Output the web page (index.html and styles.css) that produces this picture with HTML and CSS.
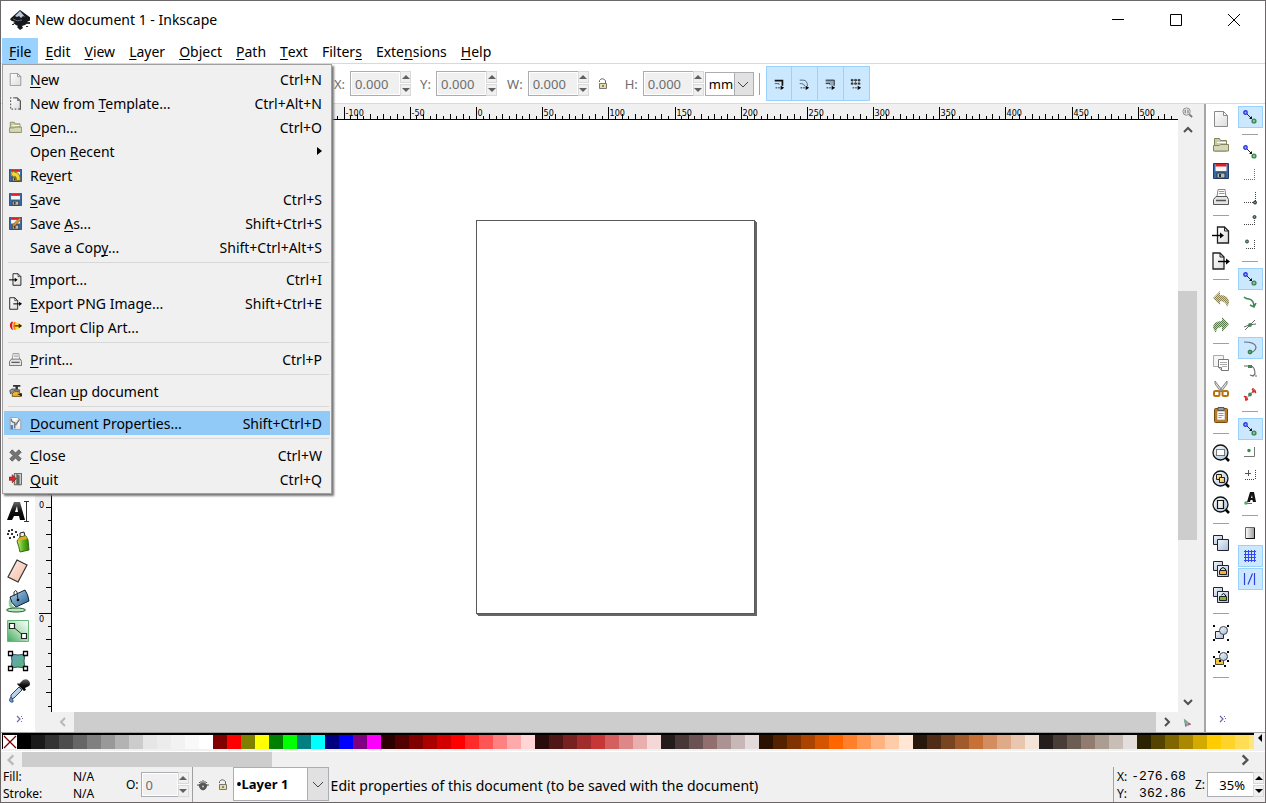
FILE: index.html
```html
<!DOCTYPE html>
<html lang="en">
<head>
<meta charset="utf-8">
<title>New document 1 - Inkscape</title>
<link rel="stylesheet" href="styles.css">
</head>
<body>
<svg class="defs" aria-hidden="true">
  <defs>
    <linearGradient id="g-paper" x1="0" y1="0" x2="1" y2="1"><stop offset="0" stop-color="#fff"/><stop offset="1" stop-color="#dcdcdc"/></linearGradient>
    <linearGradient id="g-lens" x1="0" y1="0" x2="1" y2="1"><stop offset="0" stop-color="#fff"/><stop offset="1" stop-color="#a9c4de"/></linearGradient>
    <linearGradient id="g-sky" x1="0" y1="0" x2="1" y2="1"><stop offset="0" stop-color="#f4f8fc"/><stop offset="1" stop-color="#a3bdd6"/></linearGradient>
    <linearGradient id="g-gold" x1="0" y1="0" x2="1" y2="1"><stop offset="0" stop-color="#fffbd0"/><stop offset="1" stop-color="#f0a818"/></linearGradient>
    <linearGradient id="g-green2" x1="0" y1="1" x2="1" y2="0"><stop offset="0" stop-color="#3fa85a"/><stop offset=".45" stop-color="#a6d9b1"/><stop offset="1" stop-color="#fff"/></linearGradient>
    <linearGradient id="g-can" x1="0" y1="0" x2="1" y2="0"><stop offset="0" stop-color="#c9f08a"/><stop offset=".5" stop-color="#5cb81c"/><stop offset="1" stop-color="#2e7a08"/></linearGradient>
    <linearGradient id="g-blue" x1="0" y1="0" x2="1" y2="1"><stop offset="0" stop-color="#b9d4ea"/><stop offset="1" stop-color="#1f5c94"/></linearGradient>
    <linearGradient id="g-mesh" x1="0" y1="0" x2="1" y2="1"><stop offset="0" stop-color="#6aa0cc"/><stop offset="1" stop-color="#55b866"/></linearGradient>
    <linearGradient id="g-pink" x1="0" y1="0" x2="1" y2="1"><stop offset="0" stop-color="#fff0ea"/><stop offset="1" stop-color="#f2b9a2"/></linearGradient>
    <linearGradient id="g-ink" x1="0" y1="0" x2="0" y2="1"><stop offset="0" stop-color="#666"/><stop offset=".5" stop-color="#111"/><stop offset="1" stop-color="#000"/></linearGradient>
    <linearGradient id="g-box" x1="0" y1="0" x2="1" y2="0"><stop offset="0" stop-color="#fff"/><stop offset="1" stop-color="#999"/></linearGradient>
    <pattern id="p-olive" width="2" height="2" patternUnits="userSpaceOnUse"><rect width="2" height="2" fill="#d8d2ae"/><path d="M0 0h1v1H0zM1 1h1v1H1z" fill="#8c8250"/></pattern>
    <pattern id="p-green" width="2" height="2" patternUnits="userSpaceOnUse"><rect width="2" height="2" fill="#c3d6b4"/><path d="M0 0h1v1H0zM1 1h1v1H1z" fill="#547844"/></pattern>
  </defs>
  <symbol id="i-logo" viewBox="0 0 20 20"><path d="M10 0 1 8q-2 2 1 3l3 1-2 1 3 2 2 1-1 1 3 3 3-2-1-2 3-1 3-2-1-1 2-1q3-1 2-3z" fill="#16181c"/><path d="m10 1-5 5 2 1 2-1 2 2 2-2 2 1z" fill="#b9c8dd"/><path d="M3 9q4 3 9 1" stroke="#667" fill="none"/><path d="M17 12h3v2h-3zM16 16h2v1h-2zM2 14h2v1H2z" fill="#333"/></symbol>
  <symbol id="i-new" viewBox="0 0 16 16"><path d="M1.500.5h9l4 4v11h-13z" fill="url(#g-paper)" stroke="#8a8a8a"/><path d="M10.500.5v4h4z" fill="#fff" stroke="#8a8a8a"/></symbol>
  <symbol id="i-template" viewBox="0 0 16 16"><path d="M2 1h8l4 4v10H2z" fill="url(#g-paper)"/><path d="M7 1h3l4 4v10h-2" fill="none" stroke="#555" stroke-width="1.500"/><path d="M7 1H2v14h10" fill="none" stroke="#666" stroke-width="1.500" stroke-dasharray="2 2"/><path d="M10 1v4h4z" fill="#777"/></symbol>
  <symbol id="i-open" viewBox="0 0 16 16"><path d="M1.500 14V1.500h5l1 2h6v10.500z" fill="#c9cba4" stroke="#82855c"/><path d="M4 6h9V5H4z" fill="#fff"/><path d="M.5 8.500h6l1-1h8v6.500H.5z" fill="#d4d7b8" stroke="#82855c"/></symbol>
  <symbol id="i-save" viewBox="0 0 16 16"><path d="M.5.5h15v15h-15z" fill="#3a6ba8" stroke="#1c3c70"/><path d="M2.500 1h11v7h-11z" fill="#f6f6f6"/><path d="M2.500 1h11v2.500h-11z" fill="#dc1f26"/><path d="M4 10h8v5H4z" fill="#b9bdb4" stroke="#333"/><path d="M6 11h2v3H6z" fill="#234"/></symbol>
  <symbol id="i-saveas" viewBox="0 0 16 16"><use href="#i-save"/><path d="m5 9 8-8 2 2-8 8-3 1z" fill="#e8902c" stroke="#6b4a20" stroke-width=".7"/></symbol>
  <symbol id="i-revert" viewBox="0 0 16 16"><use href="#i-save"/><path d="m2 6 5-4.500v2.500q7 0 7 10h-5q1-4-2-5v2.500z" fill="#f5d62c" stroke="#7a6110"/></symbol>
  <symbol id="i-print" viewBox="0 0 16 16"><path d="M4 8 5 .5h7l1 7.500" fill="#fff" stroke="#888"/><path d="M6 2.500h5M6 4.500h5.500" stroke="#999"/><path d="M3 7.500h11l1.500 3v5H.5v-5z" fill="#e4e4e4" stroke="#555"/><path d="M3 11.500h10" stroke="#555" stroke-width="1.500"/></symbol>
  <symbol id="i-import" viewBox="0 0 18 18"><path d="M5.500 1h7l4 4v12h-11z" fill="url(#g-paper)" stroke="#222" stroke-width="1.300"/><path d="M12.500 1v4h4" fill="none" stroke="#222"/><path d="M0 9.500h9" stroke="#000" stroke-width="1.400"/><path d="m8 6.500 4 3-4 3z"/></symbol>
  <symbol id="i-export" viewBox="0 0 18 18"><path d="M1 1h7l4 4v12H1z" fill="url(#g-paper)" stroke="#222" stroke-width="1.300"/><path d="M8 1v4h4" fill="none" stroke="#222"/><path d="M6 9.500h9" stroke="#000" stroke-width="1.400"/><path d="m14 6.500 4 3-4 3z"/></symbol>
  <symbol id="i-clip" viewBox="0 0 16 16"><path d="M3 1Q-1 5 3 10l2 1Q3 6 5 1z" fill="#e01818"/><path d="M6 1q-2 5 0 10l3-1V2z" fill="#ff7a00"/><path d="M8 2h4l4 4-4 4H8q-2-4 0-8z" fill="#ffe03a"/><path d="M7 6h7M12 4l3 2-3 2" stroke="#321" fill="none" stroke-width="1.300"/></symbol>
  <symbol id="i-clean" viewBox="0 0 16 16"><path d="M5 0h9v2H5zM8 2h3v3H8z" fill="#333"/><path d="M1 7q1-3 6-2l6 1v2L6 7l-4 4z" fill="#999" stroke="#222" stroke-width=".8"/><path d="M4 14q-1-6 5-6t6 6z" fill="#f2b52a" stroke="#5b4210"/><path d="m10 11 6-1v4z" fill="#222"/></symbol>
  <symbol id="i-props" viewBox="0 0 16 16"><path d="M1.500.5h9l4 4v11h-13z" fill="#e8e8e8" stroke="#999"/><path d="M2 2h3v3h2V2h3M12 3v9" fill="none" stroke="#fff" stroke-width="1.500"/><path d="M3 2q-1 4 4 5v7M13 3 8 10" fill="none" stroke="#707b88" stroke-width="1.800"/><path d="M2 10h3v5H2z" fill="#4d7cba"/></symbol>
  <symbol id="i-close" viewBox="0 0 16 16"><path d="m1 4 3-3 4 4 4-4 3 3-4 4 4 4-3 3-4-4-4 4-3-3 4-4z" fill="#747474" stroke="#555"/></symbol>
  <symbol id="i-quit" viewBox="0 0 16 16"><path d="M6.500.5h9v14h-9z" fill="#ccc" stroke="#444"/><path d="m9 1 4 2v12l-4-1z" fill="#5c6a5c"/><path d="M0 5h4V2l5 5-5 5V9H0z" fill="#d9262c" stroke="#7a0c10" stroke-width=".7"/></symbol>
  <symbol id="i-undo" viewBox="0 0 16 16"><path d="m0 7 7-7v4q9 0 9 8l-2 4q-1-6-7-6v4z" fill="url(#p-olive)"/></symbol>
  <symbol id="i-redo" viewBox="0 0 16 16"><path d="M16 7 9 0v4Q0 4 0 11l3 5q0-6 6-6v5z" fill="url(#p-green)"/></symbol>
  <symbol id="i-copy" viewBox="0 0 16 16"><path d="M.5.5h10v11H.5z" fill="#f5f5f5" stroke="#aaa"/><path d="M5.500 4.500h10v11h-7l-3-3z" fill="#fff" stroke="#777"/><path d="M7 7.500h7M7 9.500h7M9 11.500h5" stroke="#aaa"/><path d="M5.500 12.500h3v3" fill="#ddd" stroke="#777"/></symbol>
  <symbol id="i-cut" viewBox="0 0 16 16"><path d="m2 0 7 9-1 2L2 3zM14 0 7 9l1 2 6-8z" fill="#ddd" stroke="#777" stroke-width=".9"/><rect x="1" y="10" width="5.500" height="5" rx="1.500" fill="#fff" stroke="#b8730c" stroke-width="2"/><rect x="9.500" y="10" width="5.500" height="5" rx="1.500" fill="#fff" stroke="#b8730c" stroke-width="2"/></symbol>
  <symbol id="i-paste" viewBox="0 0 16 16"><rect x="1.500" y="1.500" width="13" height="14" rx="1" fill="#bd7d1c" stroke="#7a4a08"/><path d="M4 4h8v9H4z" fill="#fafafa" stroke="#888" stroke-width=".6"/><path d="M5 .5h6v3H5z" fill="#999" stroke="#555"/><path d="M5.500 6.500h5M5.500 8.500h5M5.500 10.500h3" stroke="#999"/></symbol>
  <symbol id="i-lens" viewBox="0 0 18 18"><path d="m13 13 4 4" stroke="#000" stroke-width="2.500"/><circle cx="8.500" cy="8.500" r="7.500" fill="url(#g-lens)" stroke="#111" stroke-width="1.300"/></symbol>
  <symbol id="i-zsel" viewBox="0 0 18 18"><use href="#i-lens"/><path d="M4.500 5.500h8v6h-8z" fill="#fff" stroke="#000" stroke-dasharray="1 1"/></symbol>
  <symbol id="i-zdraw" viewBox="0 0 18 18"><use href="#i-lens"/><path d="M4.500 4.500h5v5h-5z" fill="url(#g-gold)" stroke="#222"/><path d="M7.500 7.500h5v5h-5z" fill="url(#g-gold)" stroke="#222"/></symbol>
  <symbol id="i-zpage" viewBox="0 0 18 18"><use href="#i-lens"/><path d="M5.500 4.500h6v8h-6z" fill="url(#g-paper)" stroke="#111" stroke-width="1.200"/></symbol>
  <symbol id="i-dup" viewBox="0 0 16 16"><path d="M.5.500h9v9h-9z" fill="url(#g-sky)" stroke="#223"/><path d="M4.500 4.500h11v11h-11z" fill="url(#g-sky)" stroke="#223"/></symbol>
  <symbol id="i-clone" viewBox="0 0 16 16"><use href="#i-dup"/><path d="M7.500 9V8q2.500-3 5 0v1" fill="none" stroke="#000"/><path d="M6.500 9.500h7v4h-7z" fill="#f5b52a" stroke="#222"/></symbol>
  <symbol id="i-unlink" viewBox="0 0 16 16"><use href="#i-dup"/><path d="M8.500 8q2-3 4 0v1" fill="none" stroke="#000"/><path d="M6.500 9.500h7v4h-7z" fill="#7cb43c" stroke="#222"/></symbol>
  <symbol id="i-group" viewBox="0 0 16 16"><path d="M2.500 6.500h8v7h-8z" fill="url(#g-sky)" stroke="#223"/><circle cx="10.500" cy="5.500" r="4" fill="url(#g-sky)" stroke="#445"/><path d="M0 0h2v2H0zM14 0h2v2h-2zM0 14h2v2H0zM14 14h2v2h-2z"/></symbol>
  <symbol id="i-ungroup" viewBox="0 0 16 16"><path d="M2.500 7.500h8v6h-8z" fill="#f7c53a" stroke="#443"/><circle cx="10.500" cy="5.500" r="4" fill="url(#g-sky)" stroke="#445"/><path d="M0 5h2v2H0zM5 0h2v2H5zM14 0h2v2h-2zM0 14h2v2H0zM11 14h2v2h-2zM14 9h2v2h-2zM6 9h2v2H6z"/></symbol>
  <symbol id="i-snap" viewBox="0 0 14 14"><path d="m3 3 8 8" stroke="#222"/><path d="m6 9 3 0 0-3z" fill="#111"/><circle cx="2.500" cy="2.500" r="1.700" fill="#aab4ff" stroke="#2a36e0" stroke-width="1.400"/><circle cx="11" cy="11" r="1.900" fill="#8ec29a" stroke="#3b8850" stroke-width="1.400"/></symbol>
  <symbol id="i-bbox" viewBox="0 0 14 14"><path d="M1 11.500h11M11.500 1v11" stroke="#568a5c" stroke-dasharray="1 1"/></symbol>
  <symbol id="i-edge" viewBox="0 0 14 14"><path d="M1 11.500h10M12.500 1v9" stroke="#444" stroke-dasharray="1 1"/><circle cx="12" cy="11.500" r="1.500" fill="#68a070" stroke="#222"/></symbol>
  <symbol id="i-mid" viewBox="0 0 14 14"><path d="M1 10.500h10M11.500 4v7" stroke="#444" stroke-dasharray="1 1"/><circle cx="11.500" cy="3" r="1.500" fill="#68a070" stroke="#333"/></symbol>
  <symbol id="i-center" viewBox="0 0 14 14"><path d="M3 11.500h9M11.500 3v8" stroke="#444" stroke-dasharray="1 1"/><circle cx="4" cy="4.500" r="1.500" fill="#68a070" stroke="#345"/></symbol>
  <symbol id="i-path" viewBox="0 0 14 14"><path d="M1 2q2 2 5 2 5 1 5 8M7 10l4 2 2-4" fill="none" stroke="#3b8850" stroke-width="1.500"/></symbol>
  <symbol id="i-cross" viewBox="0 0 14 14"><path d="M1 9q6-3 12-3M2 12 12 2" fill="none" stroke="#666"/><circle cx="7" cy="7" r="1.900" fill="#3b8850"/></symbol>
  <symbol id="i-cusp" viewBox="0 0 14 14"><path d="M1 1q11 0 12 5 0 4-6 6" fill="none" stroke="#68707a" stroke-width="1.200"/><circle cx="7" cy="11" r="1.900" fill="#58a868" stroke="#26703a"/></symbol>
  <symbol id="i-smooth" viewBox="0 0 14 14"><path d="M1 2h6q5 0 5 8l-2 2-3-1M12 12l2 0" fill="none" stroke="#666" stroke-width="1.200"/><path d="M5 1h4v3H5z" fill="#3b8850"/></symbol>
  <symbol id="i-line" viewBox="0 0 14 14"><path d="M2 13 12 2" stroke="#888"/><path d="m1 9 4 4M2 12h3M9 2l4 4M10 4h3M10 1v5M3 9v5" stroke="#d82a2a" stroke-width="1.400"/><circle cx="7" cy="7.500" r="1.900" fill="#3b8850"/></symbol>
  <symbol id="i-obj" viewBox="0 0 14 14"><path d="M1 11.500h10.500V2" fill="none" stroke="#777"/><circle cx="6" cy="5.500" r="1.700" fill="#3b8850"/></symbol>
  <symbol id="i-rot" viewBox="0 0 14 14"><path d="M2 11.500h10M12.500 2v10" stroke="#444" stroke-dasharray="1 1"/><path d="M2 5.500h6M5.500 2v6" stroke="#555"/></symbol>
  <symbol id="i-base" viewBox="0 0 14 14"><path d="M4 11 7 1h4l2 10h-3l-.5-2H7.500L7 11zM8 7h1.500L9 4z" fill="#111" fill-rule="evenodd"/><path d="M2 12.500h7" stroke="#3b8850"/><circle cx="3" cy="12" r="1.800" fill="#58a868"/></symbol>
  <symbol id="i-pageb" viewBox="0 0 14 14"><path d="M2.500 1.500h9v11h-9z" fill="url(#g-box)" stroke="#666"/><path d="M11.500 2v10.500H3" fill="none" stroke="#111"/></symbol>
  <symbol id="i-grid" viewBox="0 0 14 14"><path d="M2.500 1v12M5.500 1v12M8.500 1v12M11.500 1v12M1 2.500h12M1 5.500h12M1 8.500h12M1 11.500h12" stroke="#3348ee"/></symbol>
  <symbol id="i-guide" viewBox="0 0 14 14"><path d="M1.500 1v12M5 12.500l4.500-11M11.500 1v12" fill="none" stroke="#3340e0" stroke-width="1.200"/></symbol>
  <symbol id="i-text" viewBox="0 0 24 24"><path d="M1 21 8 3h6l5 18h-5l-1-4H8l-2 4zM9 13h3l-1-6z" fill="url(#g-ink)" fill-rule="evenodd"/><path d="M18 2.500h5M18 22.500h5M20.500 3v19" stroke="#333"/></symbol>
  <symbol id="i-spray" viewBox="0 0 24 24"><path d="M2 1h2v2H2zM5 0h2v2H5zM1 4h2v2H1zM5 4h2v2H5zM9 2h2v2H9zM3 8h2v2H3zM7 7h2v2H7zM11 5h1v2h-1z" fill="#333"/><path d="m14 4 4-1 1 4-5 1z" fill="#eee" stroke="#222"/><path d="m11 12 3-4 6-1 2 4 1 10-9 2q-1-5-3-11z" fill="url(#g-can)" stroke="#356b12"/><path d="m12 10 3-2 5-1 1 3-9 2z" fill="#e8a820"/></symbol>
  <symbol id="i-eraser" viewBox="0 0 24 24"><path d="m11 1 10 5-9 17-10-5z" fill="url(#g-pink)" stroke="#333" stroke-width="1.200"/></symbol>
  <symbol id="i-bucket" viewBox="0 0 24 24"><path d="M5 10Q2 17 9 20" fill="none" stroke="#8ccf9c" stroke-width="3"/><ellipse cx="10" cy="21" rx="9.500" ry="2" fill="#b9e6bc" stroke="#265a30"/><path d="m4 8 15-7q3 4 4 11L10 18Q5 14 4 8z" fill="url(#g-blue)" stroke="#123"/><path d="M8 7V3q2-3 3 0l1 8" fill="none" stroke="#333"/><circle cx="12" cy="11" r="1.300"/></symbol>
  <symbol id="i-gradient" viewBox="0 0 24 24"><path d="M1.500 1.500h21v21h-21z" fill="url(#g-green2)" stroke="#64b878"/><path d="m6 7 12 10" stroke="#333"/><path d="M3.500 4.500h5v5h-5zM15.500 14.500h5v5h-5z" fill="#fff" stroke="#222" stroke-width="1.200"/></symbol>
  <symbol id="i-mesh" viewBox="0 0 24 24"><path d="M4 4q8 4 16 0-4 8 0 16-8-4-16 0 4-8 0-16z" fill="url(#g-mesh)" stroke="#356"/><path d="M2.500 2.500h4v4h-4zM17.500 2.500h4v4h-4zM2.500 17.500h4v4h-4zM17.500 17.500h4v4h-4z" fill="#fff" stroke="#000" stroke-width="1.300"/></symbol>
  <symbol id="i-dropper" viewBox="0 0 24 24"><path d="m13 8 3 3-8 8-3 1 0-4z" fill="#b5d0ea" stroke="#345"/><path d="M13 5 17 1q4-2 6 1t0 5l-4 2 1 2-2 1-7-7 1-1z" fill="url(#g-ink)"/><path d="M5 18q-3 4 0 5t2-2z" fill="#6f9ccc" stroke="#358"/></symbol>
  <symbol id="i-unlock" viewBox="0 0 10 12"><path d="M1.500 4V2.500Q4-1 7.500 2.500V6" fill="none" stroke="#666"/><path d="M1.500 5.500h7v5h-7z" fill="#e6dca0" stroke="#777"/><path d="M4 7h2v2H4z" fill="#887"/></symbol>
  <symbol id="i-eye" viewBox="0 0 12 12"><path d="M2 6q4-4 8 0-1 5-4 5T2 6zM2 3l1 1M6 1v3M10 3 9 4M0 6h2M12 6h-2M4 2v2M8 2v2" fill="#555" stroke="#555"/><circle cx="6" cy="7.500" r="1" fill="#ccc"/></symbol>
  <symbol id="i-st1" viewBox="0 0 14 14"><path d="M2 3h9v6" fill="none" stroke="#111" stroke-width="2"/><path d="M2 6.500h5V8" fill="none" stroke="#456"/><path d="M3 11.500h7" stroke="#111" stroke-dasharray="2 1"/><path d="m9 9 4 2.500L9 14z"/></symbol>
  <symbol id="i-st2" viewBox="0 0 14 14"><path d="M2 2.500h4q5 0 5 7M2 6.500h2q3 0 4 3" fill="none" stroke="#456"/><path d="M3 11.500h7" stroke="#111" stroke-dasharray="2 1"/><path d="m9 9 4 2.500L9 14z"/></symbol>
  <symbol id="i-st3" viewBox="0 0 14 14"><path d="M2 2h10v7H8V6H2z" fill="#8fa6c4"/><path d="M2 2.500h10V9M2 6.500h5V8" fill="none" stroke="#222"/><path d="M3 11.500h7" stroke="#111" stroke-dasharray="2 1"/><path d="m9 9 4 2.500L9 14z"/></symbol>
  <symbol id="i-st4" viewBox="0 0 14 14"><path d="M1 2.500h12M1 6.500h12" stroke="#222" stroke-width="2" stroke-dasharray="3 1"/><path d="M2.500 1v7M6.500 1v7M10.500 1v7" stroke="#555"/><path d="M3 11.500h7" stroke="#111" stroke-dasharray="2 1"/><path d="m9 9 4 2.500L9 14z"/></symbol>
  <symbol id="i-z11" viewBox="0 0 12 12"><path d="m8 8 3 3" stroke="#777" stroke-width="2"/><circle cx="5" cy="5" r="4" fill="#e8e8e8" stroke="#888"/><path d="M3.500 3v4M6.500 3v4" stroke="#666"/></symbol>
  <symbol id="i-cms" viewBox="0 0 12 12"><path d="m2 2 8 6-6 3z" fill="#a2a2aa"/><path d="m2 2 4 3-3 3z" fill="#6fae7a"/><path d="m7 6 3 2-3 1z" fill="#b46"/><path d="m3 8 2 0-1 3z" fill="#56b"/></symbol>
  <symbol id="i-more" viewBox="0 0 10 10"><path d="m2 2 3 3-3 3" fill="none" stroke="#6a6aa8" stroke-width="1.200"/><path d="M6 2h1v1H6zM8 5h1v0H8zM7 4h1v1H7zM6 7h1v1H6z" fill="#6a6aa8"/></symbol>
  <symbol id="i-up" viewBox="0 0 12 12"><path d="m2 8 4-4 4 4" fill="none" stroke="#505050" stroke-width="2"/></symbol>
  <symbol id="i-down" viewBox="0 0 12 12"><path d="m2 4 4 4 4-4" fill="none" stroke="#505050" stroke-width="2"/></symbol>
  <symbol id="i-left" viewBox="0 0 12 12"><path d="M8 2 4 6l4 4" fill="none" stroke="#b8b8b8" stroke-width="2"/></symbol>
  <symbol id="i-right" viewBox="0 0 12 12"><path d="m4 2 4 4-4 4" fill="none" stroke="#505050" stroke-width="2"/></symbol>
</svg>

<div class="window">
  <header class="titlebar">
    <svg class="logo"><use href="#i-logo"/></svg>
    <h1 class="title">New document 1 - Inkscape</h1>
    <button class="winbtn" aria-label="Minimize"><svg viewBox="0 0 12 12"><path d="M0 5.500h12" stroke="#000"/></svg></button>
    <button class="winbtn" aria-label="Maximize"><svg viewBox="0 0 12 12"><path d="M.5.5h11v11H.5z" fill="none" stroke="#000"/></svg></button>
    <button class="winbtn" aria-label="Close"><svg viewBox="0 0 12 12"><path d="m0 0 12 12M12 0 0 12" stroke="#000"/></svg></button>
  </header>

  <nav class="menubar">
    <div class="menu-root">
      <button class="menu-title open"><u>F</u>ile</button>
      <div class="menu" role="menu">
        <button class="item" role="menuitem"><svg><use href="#i-new"/></svg><span><u>N</u>ew</span><kbd>Ctrl+N</kbd></button>
        <button class="item" role="menuitem"><svg><use href="#i-template"/></svg><span>New from <u>T</u>emplate...</span><kbd>Ctrl+Alt+N</kbd></button>
        <button class="item" role="menuitem"><svg><use href="#i-open"/></svg><span><u>O</u>pen...</span><kbd>Ctrl+O</kbd></button>
        <button class="item" role="menuitem"><svg></svg><span>Open <u>R</u>ecent</span><i class="submenu"></i></button>
        <button class="item" role="menuitem"><svg><use href="#i-revert"/></svg><span>Re<u>v</u>ert</span></button>
        <button class="item" role="menuitem"><svg><use href="#i-save"/></svg><span><u>S</u>ave</span><kbd>Ctrl+S</kbd></button>
        <button class="item" role="menuitem"><svg><use href="#i-saveas"/></svg><span>Save <u>A</u>s...</span><kbd>Shift+Ctrl+S</kbd></button>
        <button class="item" role="menuitem"><svg></svg><span>Save a Cop<u>y</u>...</span><kbd>Shift+Ctrl+Alt+S</kbd></button>
        <hr>
        <button class="item" role="menuitem"><svg><use href="#i-import"/></svg><span><u>I</u>mport...</span><kbd>Ctrl+I</kbd></button>
        <button class="item" role="menuitem"><svg><use href="#i-export"/></svg><span><u>E</u>xport PNG Image...</span><kbd>Shift+Ctrl+E</kbd></button>
        <button class="item" role="menuitem"><svg><use href="#i-clip"/></svg><span>Import Clip Art...</span></button>
        <hr>
        <button class="item" role="menuitem"><svg><use href="#i-print"/></svg><span><u>P</u>rint...</span><kbd>Ctrl+P</kbd></button>
        <hr>
        <button class="item" role="menuitem"><svg><use href="#i-clean"/></svg><span>Clean <u>u</u>p document</span></button>
        <hr>
        <button class="item active" role="menuitem"><svg><use href="#i-props"/></svg><span><u>D</u>ocument Properties...</span><kbd>Shift+Ctrl+D</kbd></button>
        <hr>
        <button class="item" role="menuitem"><svg><use href="#i-close"/></svg><span><u>C</u>lose</span><kbd>Ctrl+W</kbd></button>
        <button class="item" role="menuitem"><svg><use href="#i-quit"/></svg><span><u>Q</u>uit</span><kbd>Ctrl+Q</kbd></button>
      </div>
    </div>
    <button class="menu-title"><u>E</u>dit</button>
    <button class="menu-title"><u>V</u>iew</button>
    <button class="menu-title"><u>L</u>ayer</button>
    <button class="menu-title"><u>O</u>bject</button>
    <button class="menu-title"><u>P</u>ath</button>
    <button class="menu-title"><u>T</u>ext</button>
    <button class="menu-title">Filter<u>s</u></button>
    <button class="menu-title">Exte<u>n</u>sions</button>
    <button class="menu-title"><u>H</u>elp</button>
  </nav>

  <div class="controls">
    <div class="field"><label for="x">X:</label><span class="spin"><input id="x" value="0.000" disabled><span class="steps"><button aria-label="Increase X"></button><button aria-label="Decrease X"></button></span></span></div>
    <div class="field"><label for="y">Y:</label><span class="spin"><input id="y" value="0.000" disabled><span class="steps"><button aria-label="Increase Y"></button><button aria-label="Decrease Y"></button></span></span></div>
    <div class="field wide"><label for="w">W:</label><span class="spin"><input id="w" value="0.000" disabled><span class="steps"><button aria-label="Increase W"></button><button aria-label="Decrease W"></button></span></span></div>
    <button class="lock" aria-label="Lock ratio"><svg><use href="#i-unlock"/></svg></button>
    <div class="field"><label for="h">H:</label><span class="spin"><input id="h" value="0.000" disabled><span class="steps"><button aria-label="Increase H"></button><button aria-label="Decrease H"></button></span></span></div>
    <span class="combo unit"><select aria-label="Unit"><option>mm</option></select><svg viewBox="0 0 12 12"><path d="m1 4 5 5 5-5" fill="none" stroke="#444"/></svg></span>
    <span class="vsep"></span>
    <div class="toggles">
      <button aria-label="Scale stroke width"><svg><use href="#i-st1"/></svg></button>
      <button aria-label="Scale rounded corners"><svg><use href="#i-st2"/></svg></button>
      <button aria-label="Move gradients"><svg><use href="#i-st3"/></svg></button>
      <button aria-label="Move patterns"><svg><use href="#i-st4"/></svg></button>
    </div>
  </div>

  <main class="work">
    <div class="toolbox">
      <button aria-label="Text"><svg><use href="#i-text"/></svg></button>
      <button aria-label="Spray"><svg><use href="#i-spray"/></svg></button>
      <button aria-label="Eraser"><svg><use href="#i-eraser"/></svg></button>
      <button aria-label="Fill"><svg><use href="#i-bucket"/></svg></button>
      <button aria-label="Gradient"><svg><use href="#i-gradient"/></svg></button>
      <button aria-label="Mesh"><svg><use href="#i-mesh"/></svg></button>
      <button aria-label="Dropper"><svg><use href="#i-dropper"/></svg></button>
      <button class="more" aria-label="More tools"><svg><use href="#i-more"/></svg></button>
    </div>
    <div class="desk">
      <div class="corner"></div>
      <svg class="ruler-h" id="ruler-h"></svg>
      <button class="mini" aria-label="Zoom drawing on resize"><svg><use href="#i-z11"/></svg></button>
      <svg class="ruler-v" id="ruler-v"></svg>
      <div class="canvas"><div class="page"></div></div>
      <div class="vscroll">
        <button aria-label="Scroll up"><svg><use href="#i-up"/></svg></button>
        <div class="vtrack"><div class="vthumb"></div></div>
        <button aria-label="Scroll down"><svg><use href="#i-down"/></svg></button>
      </div>
      <div class="corner"></div>
      <div class="hscroll">
        <button aria-label="Scroll left"><svg><use href="#i-left"/></svg></button>
        <div class="hthumb"></div>
        <button aria-label="Scroll right"><svg><use href="#i-right"/></svg></button>
      </div>
      <button class="mini" aria-label="Color management"><svg><use href="#i-cms"/></svg></button>
    </div>
    <div class="side">
      <div class="commands">
        <button aria-label="New"><svg><use href="#i-new"/></svg></button>
        <button aria-label="Open"><svg><use href="#i-open"/></svg></button>
        <button aria-label="Save"><svg><use href="#i-save"/></svg></button>
        <button aria-label="Print"><svg><use href="#i-print"/></svg></button>
        <hr>
        <button aria-label="Import"><svg class="big"><use href="#i-import"/></svg></button>
        <button aria-label="Export"><svg class="big"><use href="#i-export"/></svg></button>
        <hr>
        <button aria-label="Undo"><svg><use href="#i-undo"/></svg></button>
        <button aria-label="Redo"><svg><use href="#i-redo"/></svg></button>
        <hr>
        <button aria-label="Copy"><svg><use href="#i-copy"/></svg></button>
        <button aria-label="Cut"><svg><use href="#i-cut"/></svg></button>
        <button aria-label="Paste"><svg><use href="#i-paste"/></svg></button>
        <hr>
        <button aria-label="Zoom selection"><svg class="big"><use href="#i-zsel"/></svg></button>
        <button aria-label="Zoom drawing"><svg class="big"><use href="#i-zdraw"/></svg></button>
        <button aria-label="Zoom page"><svg class="big"><use href="#i-zpage"/></svg></button>
        <hr>
        <button aria-label="Duplicate"><svg><use href="#i-dup"/></svg></button>
        <button aria-label="Clone"><svg><use href="#i-clone"/></svg></button>
        <button aria-label="Unlink clone"><svg><use href="#i-unlink"/></svg></button>
        <hr>
        <button aria-label="Group"><svg><use href="#i-group"/></svg></button>
        <button aria-label="Ungroup"><svg><use href="#i-ungroup"/></svg></button>
        <hr>
        <button class="more" aria-label="More commands"><svg><use href="#i-more"/></svg></button>
      </div>
      <div class="snaps">
        <button class="on" aria-label="Enable snapping"><svg><use href="#i-snap"/></svg></button>
        <hr>
        <button aria-label="Snap bounding boxes"><svg><use href="#i-snap"/></svg></button>
        <button aria-label="Snap box edges"><svg><use href="#i-bbox"/></svg></button>
        <button aria-label="Snap box corners"><svg><use href="#i-edge"/></svg></button>
        <button aria-label="Snap edge midpoints"><svg><use href="#i-mid"/></svg></button>
        <button aria-label="Snap box centers"><svg><use href="#i-center"/></svg></button>
        <hr>
        <button class="on" aria-label="Snap nodes"><svg><use href="#i-snap"/></svg></button>
        <button aria-label="Snap to paths"><svg><use href="#i-path"/></svg></button>
        <button aria-label="Snap intersections"><svg><use href="#i-cross"/></svg></button>
        <button class="on" aria-label="Snap cusp nodes"><svg><use href="#i-cusp"/></svg></button>
        <button aria-label="Snap smooth nodes"><svg><use href="#i-smooth"/></svg></button>
        <button aria-label="Snap line midpoints"><svg><use href="#i-line"/></svg></button>
        <hr>
        <button class="on" aria-label="Snap others"><svg><use href="#i-snap"/></svg></button>
        <button aria-label="Snap object centers"><svg><use href="#i-obj"/></svg></button>
        <button aria-label="Snap rotation centers"><svg><use href="#i-rot"/></svg></button>
        <button aria-label="Snap text baselines"><svg><use href="#i-base"/></svg></button>
        <hr>
        <button aria-label="Snap page border"><svg><use href="#i-pageb"/></svg></button>
        <button class="on" aria-label="Snap grids"><svg><use href="#i-grid"/></svg></button>
        <button class="on" aria-label="Snap guides"><svg><use href="#i-guide"/></svg></button>
      </div>
    </div>
  </main>

  <section class="palette">
    <div class="swatches" id="swatches"></div>
    <button class="palette-menu" aria-label="Palette menu"><svg viewBox="0 0 4 8"><path d="M4 0v8L0 4z"/></svg></button>
  </section>
  <div class="pscroll">
    <button aria-label="Palette left"><svg><use href="#i-left"/></svg></button>
    <div class="pthumb"></div>
    <button aria-label="Palette right"><svg><use href="#i-right"/></svg></button>
  </div>

  <footer class="status">
    <dl class="style"><dt>Fill:</dt><dd>N/A</dd><dt>Stroke:</dt><dd>N/A</dd></dl>
    <div class="field opacity"><label for="o">O:</label><span class="spin"><input id="o" value="0" disabled><span class="steps"><button aria-label="Increase opacity"></button><button aria-label="Decrease opacity"></button></span></span></div>
    <div class="layer">
      <button aria-label="Layer visibility"><svg><use href="#i-eye"/></svg></button>
      <button aria-label="Layer lock"><svg><use href="#i-unlock"/></svg></button>
      <span class="combo"><select aria-label="Layer"><option>•Layer 1</option></select><svg viewBox="0 0 12 12"><path d="m1 4 5 5 5-5" fill="none" stroke="#444"/></svg></span>
    </div>
    <p class="hint">Edit properties of this document (to be saved with the document)</p>
    <dl class="coords"><dt>X:</dt><dd>-276.68</dd><dt>Y:</dt><dd>362.86</dd></dl>
    <div class="field zoom"><label for="z">Z:</label><span class="spin"><input id="z" value="35%"><span class="steps"><button aria-label="Zoom in"></button><button aria-label="Zoom out"></button></span></span></div>
  </footer>
</div>
<script src="script.js"></script>
</body>
</html>
```
FILE: styles.css
```css
* { box-sizing: border-box; }
body { margin: 0; font: 14px/20px "Noto Sans", "Open Sans", sans-serif; color: #000; }
button { margin: 0; padding: 0; border: 0; background: none; color: inherit; font: inherit; display: flex; align-items: center; justify-content: center; }
input, select { font: inherit; margin: 0; border-radius: 0; }
hr { margin: 0; border: 0; }
u { text-decoration: underline; text-underline-offset: 2px; text-decoration-skip-ink: none; }
svg { display: block; flex: none; }
.defs { position: absolute; width: 0; height: 0; }

.window { display: flex; flex-direction: column; height: 100vh; border: 1px solid #6b6769; background: #f0f0f0; overflow: hidden; }

.titlebar { display: flex; align-items: center; height: 37px; padding: 0 2px 0 9px; background: #fff; flex: none; }
.logo { width: 20px; height: 20px; }
.title { flex: 1; margin: 0 0 0 5px; font-size: 14px; font-weight: 400; }
.winbtn { width: 58px; height: 37px; }
.winbtn svg { width: 12px; height: 12px; }

.menubar { display: flex; height: 26px; padding-left: 1px; background: #fff; border-bottom: 1px solid #d9d9d9; flex: none; }
.menu-root { position: relative; }
.menu-title { height: 26px; padding: 2px 7px 0; }
.menu-title.open { background: #99d1ff; }
.menu { position: absolute; z-index: 5; top: 26px; left: 0; width: 330px; padding: 2px 1px; background: #f0f0f0; border: 1px solid #a0a0a0; box-shadow: 2px 2px 2px #777; }
.item { width: 100%; height: 24px; padding: 0 8px 0 5px; justify-content: flex-start; gap: 8px; white-space: nowrap; }
.item svg { width: 13px; height: 13px; }
.item span { flex: 1; padding-top: 2px; text-align: left; }
.item kbd { padding-top: 2px; font: inherit; }
.item.active { background: #91c9f7; }
.submenu { border: 4px solid transparent; border-left: 5px solid #000; border-right: 0; }
.menu hr { height: 8px; padding: 3px 0 4px; margin: 0 1px 0 4px; background: #d7d7d7 content-box; }

.controls { display: flex; align-items: center; height: 40px; padding-left: 333px; background: #fff; border-bottom: 1px solid #d9d9d9; flex: none; }
.field { display: flex; align-items: center; gap: 5px; color: #6d6d6d; }
.controls .field { margin-right: 9px; }
.controls .field.wide { margin: 0 0 0 1px; }
.controls label { min-width: 11px; font-size: 13px; }
.spin { display: flex; height: 25px; }
.spin input { width: 50px; height: 25px; padding: 0 4px; font-size: 13px; color: #6d6d6d; background: #f0f0f0; border: 1px solid #abadb3; border-right: 0; box-shadow: inset 0 0 0 1px #fff; }
.steps { display: flex; flex-direction: column; gap: 1px; width: 11px; background: #fff; }
.steps button { flex: 1; border: 1px solid #d9d9d9; background: #f0f0f0; }
.steps button::before { content: ""; border: 4px solid transparent; border-top: 0; border-bottom-color: #606060; }
.steps button + button::before { border-top: 4px solid #606060; border-bottom: 0; }
.lock { width: 28px; height: 25px; margin-right: 8px; }
.lock svg, .layer button svg { width: 10px; height: 12px; }
.controls .lock + .field { margin-right: 1px; }
.combo { display: flex; position: relative; border: 1px solid #abadb3; background: #fff; }
.combo select { width: 100%; appearance: none; border: 0; padding: 0 0 0 3px; background: linear-gradient(#abadb3, #abadb3) right 20px top / 1px 100% no-repeat, linear-gradient(#e1e1e1, #e1e1e1) right / 20px 100% no-repeat; }
.combo svg { position: absolute; right: 4px; top: 50%; width: 12px; height: 12px; margin-top: -6px; pointer-events: none; }
.unit { width: 49px; height: 24px; }
.unit select { background-size: 1px 100%, 19px 100%; background-position: right 18px top, right; font-size: 13px; }
.vsep { width: 1px; height: 22px; margin: 0 6px 0 5px; background: #a0a0a0; }
.toggles { display: flex; }
.toggles button { width: 26px; height: 35px; border: 1px solid #99d1ff; background: #cce8ff; }
.toggles button + button { border-left: 0; }
.toggles svg { width: 12px; height: 12px; }

.work { flex: 1; display: flex; min-height: 0; border-bottom: 1px solid #a0a0a0; }
.toolbox { display: flex; flex-direction: column; justify-content: flex-end; width: 34px; background: #fff; }
.toolbox button { height: 30px; flex: none; }
.toolbox svg { width: 24px; height: 24px; }
.toolbox .more { height: 26px; padding-left: 4px; }
.toolbox .more svg, .commands .more svg { width: 10px; height: 10px; }

.desk { flex: 1; min-width: 0; display: grid; grid-template: 16px 1fr 20px / 17px 1fr 26px; }
.ruler-h, .ruler-v { width: 100%; height: 100%; overflow: hidden; min-width: 0; min-height: 0; }
.ruler-h text, .ruler-v text { font: 9px "DejaVu Sans Condensed", "DejaVu Sans", sans-serif; fill: #000; }
.mini { padding-right: 7px; }
.mini svg { width: 11px; height: 11px; }
.canvas { position: relative; background: #fff; overflow: hidden; }
.page { position: absolute; left: 424px; top: 100px; width: 279px; height: 394px; border: 1px solid #5a5a5a; box-shadow: 1px 1px 0 #666, 2px 2px 0 #666; }
.vscroll { display: flex; flex-direction: column; padding-right: 7px; min-height: 0; }
.vscroll button { height: 20px; }
.vscroll svg, .hscroll svg { width: 12px; height: 12px; }
.vtrack { flex: 1; display: flex; flex-direction: column; }
.vtrack::before { content: ""; flex: 151; }
.vtrack::after { content: ""; flex: 152; }
.vthumb { flex: 249; background: #cdcdcd; }
.hscroll { display: flex; }
.hscroll button { width: 22px; }
.hthumb { flex: 1; background: #cdcdcd; }

.side { display: flex; padding: 2px 2px 0 2px; background: #fff; border-left: 2px solid #a6a6a6; }
.commands, .snaps { display: flex; flex-direction: column; align-items: center; }
.commands { width: 26px; }
.commands button { width: 26px; height: 26px; flex: none; }
.commands svg { width: 16px; height: 16px; }
.commands svg.big { width: 18px; height: 18px; }
.commands hr, .snaps hr { width: 16px; height: 12px; padding: 5px 0 6px; background: #a0a0a0 content-box; flex: none; }
.commands .more { margin-top: auto; padding-left: 4px; }
.snaps { width: 26px; margin-left: 3px; }
.snaps button { width: 25px; height: 22px; margin-bottom: 1px; border: 1px solid transparent; flex: none; }
.snaps .on { border-color: #99d1ff; background: #cce8ff; }
.snaps svg { width: 14px; height: 14px; }

.palette { display: flex; height: 19px; padding-left: 1px; flex: none; background: #f0f0f0; border-bottom: 1px solid #fff; }
.swatches { flex: 1; display: flex; height: 16px; border: solid #000; border-width: 2px 0 0 1px; overflow: hidden; }
.swatch { width: 14px; height: 14px; flex: none; }
.swatch svg { width: 14px; height: 14px; }
.palette-menu { width: 11px; height: 9px; }
.palette-menu svg { width: 4px; height: 8px; }

.pscroll { display: flex; height: 15px; flex: none; }
.pscroll button { width: 20px; }
.pscroll button:last-child { margin-left: auto; margin-right: 10px; }
.pscroll svg { width: 14px; height: 14px; }
.pthumb { width: 250px; margin-left: 1px; background: #cdcdcd; }

.status { display: flex; height: 35px; flex: none; }
.style, .coords { display: grid; margin: 0; padding-top: 1px; font-size: 12px; line-height: 17px; white-space: nowrap; }
.style { grid-template-columns: 70px 53px; padding-left: 2px; align-content: start; }
.style dd, .coords dd { margin: 0; }
.opacity { align-self: center; gap: 2px; }
.opacity label, .zoom label { font-size: 12px; color: #000; }
.opacity input { width: 37px; }
.layer { display: flex; align-items: center; margin-left: 3px; border-left: 1px solid #a0a0a0; }
.layer button { width: 20px; height: 30px; }
.layer button:first-child svg { width: 12px; height: 12px; }
.layer .combo { width: 96px; height: 34px; align-self: flex-start; }
.layer select { font-size: 13px; font-weight: 700; }
.hint { flex: 1; margin: 0; padding: 1px 0 0 2px; line-height: 35px; white-space: nowrap; overflow: hidden; }
.coords { grid-template-columns: 14px 55px; padding-left: 3px; border-left: 1px solid #a0a0a0; align-content: start; }
.coords dd { font-family: "Liberation Mono", monospace; font-size: 13px; text-align: right; }
.zoom { align-self: center; gap: 2px; margin: 0 1px 0 9px; }
.zoom input { width: 46px; padding: 0 8px; color: #000; background: #fff; text-align: right; }
.zoom .steps button::before { border-bottom-color: #000; }
.zoom .steps button + button::before { border-top-color: #000; }
```
FILE: script.js
```js
const NS = "http://www.w3.org/2000/svg";
function add(parent, tag, attrs, text) {
  const el = document.createElementNS(NS, tag);
  for (const k in attrs) el.setAttribute(k, attrs[k]);
  if (text) el.textContent = text;
  parent.appendChild(el);
}

// Horizontal ruler: a label each 50 mm, ten divisions between labels.
const STEP = 66.18;
const rh = document.getElementById("ruler-h");
const width = rh.getBoundingClientRect().width;
for (let i = -70; i <= 106; i++) {
  const x = Math.round(424 + i * STEP / 10) + 0.5;
  if (x < 0 || x > width) continue;
  const top = i % 10 === 0 ? 3 : i % 2 === 0 ? 10 : 12;
  add(rh, "path", { d: `M${x} ${top}V16`, stroke: "#000" });
  if (i % 10 === 0 && i >= -20) add(rh, "text", { x: x + 1, y: 12 }, String(i * 5));
}
add(rh, "path", { d: `M0 15.5H${width}`, stroke: "#000" });

// Vertical ruler: digits of a label are stacked.
const rv = document.getElementById("ruler-v");
const height = rv.getBoundingClientRect().height;
for (let i = -7; i <= 37; i++) {
  const y = Math.round(493 - i * STEP / 5) + 0.5;
  if (y < 0 || y > height) continue;
  const left = i % 10 === 0 ? 4 : i % 2 === 0 ? 11 : 13;
  add(rv, "path", { d: `M${left} ${y}H17`, stroke: "#000" });
  if (i === 0) add(rv, "text", { x: 4, y: y + 8 }, "0");
  if (i === 10) add(rv, "text", { x: 4, y: y + 26 }, "0");
}
add(rv, "path", { d: `M16.5 0V${height}`, stroke: "#000" });

// Color palette
const colors = ("000000 1a1a1a 333333 4d4d4d 666666 808080 999999 b3b3b3 cccccc e6e6e6 ececec f2f2f2 f9f9f9 ffffff " +
  "800000 ff0000 808000 ffff00 008000 00ff00 008080 00ffff 000080 0000ff 800080 ff00ff " +
  "2b0000 550000 800000 aa0000 d40000 ff0000 ff2a2a ff5555 ff8080 ffaaaa ffd5d5 " +
  "280b0b 501616 782121 a02c2c c83737 d35f5f de8787 e9afaf f4d7d7 " +
  "241c1c 483737 6c5353 916f6f ac9393 c8b7b7 e3dbdb " +
  "2b1100 552200 803300 aa4400 d45500 ff6600 ff7f2a ff9955 ffb380 ffccaa ffe6d5 " +
  "28170b 502d16 784421 a05a2c c87137 d38d5f deaa87 e9c6af f4e3d7 " +
  "241f1c 483e37 6c5d53 917c6f ac9d93 c8beb7 e3dedb " +
  "2b2200 554400 806600 aa8800 d4aa00 ffcc00 ffd42a ffdd55 ffe680").split(" ");
const box = document.getElementById("swatches");
box.innerHTML = '<button class="swatch" aria-label="None"><svg viewBox="0 0 14 14"><path d="M0 0h14v14H0z" fill="#fff"/><path d="m1 1 12 12M13 1 1 13" stroke="#700" stroke-width="1.3"/></svg></button>' +
  colors.map(c => `<button class="swatch" aria-label="#${c}" style="background:#${c}"></button>`).join("");
```
